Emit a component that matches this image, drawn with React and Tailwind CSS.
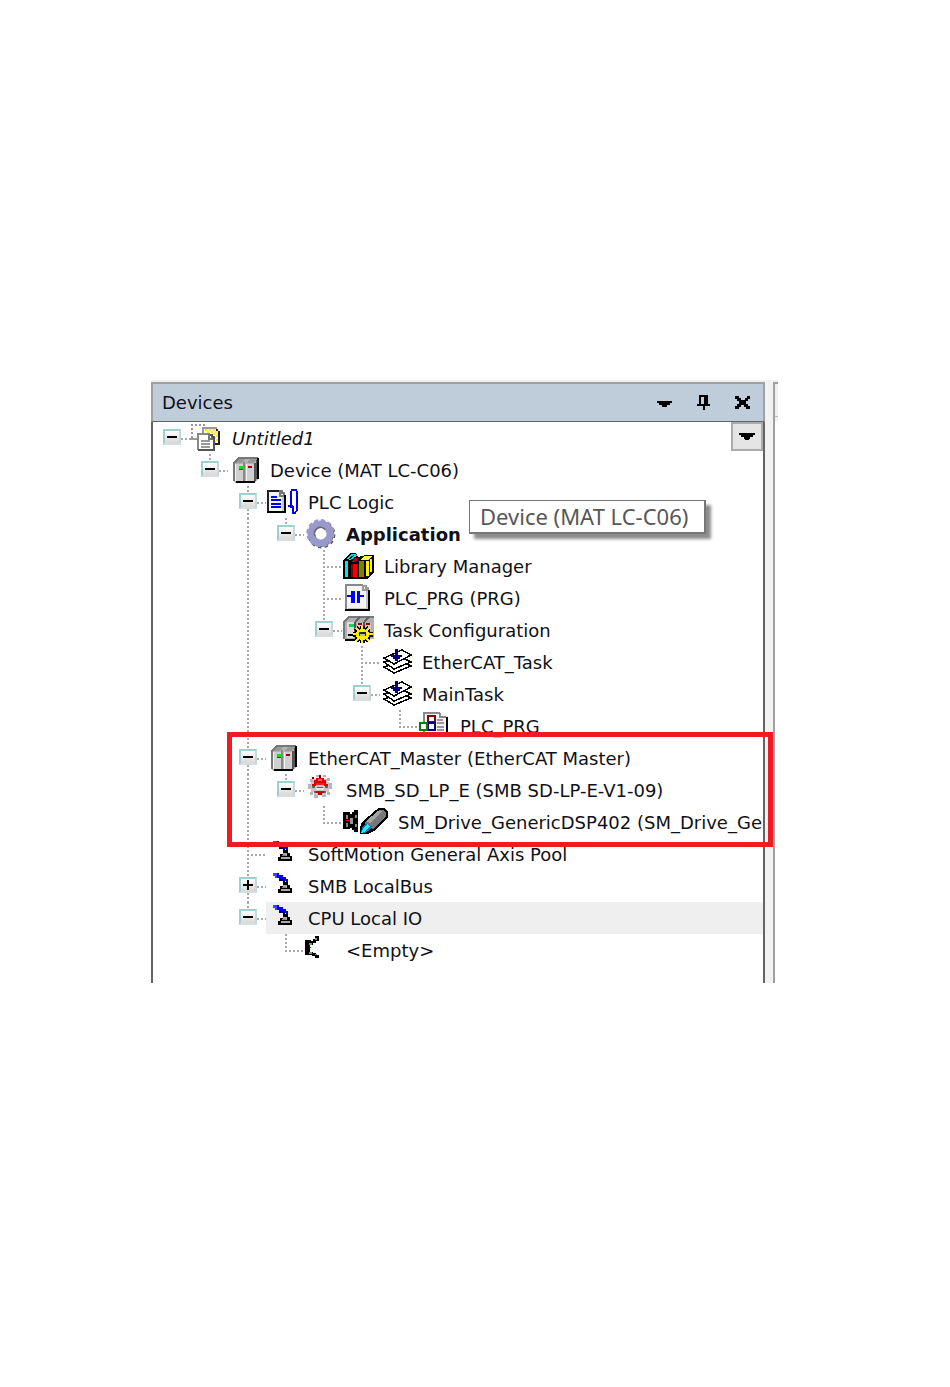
import React from 'react';

const svgProps = {
  viewBox: '0 0 32 32',
  className: 'block h-8 w-8 shrink-0 overflow-visible',
  shapeRendering: 'crispEdges',
  'aria-hidden': true,
};

function ProjectIcon() {
  return (
    <svg {...svgProps}>
      <path d="M1 3H16M2 6V18" stroke="#999" strokeWidth="2" strokeDasharray="2 2" fill="none" />
      <path d="M0 17H7" stroke="#999" strokeWidth="2" />
      <path d="M13 6H28V24H13Z" fill="#fffde0" />
      <path d="M15 8h13M15 12h13M24 16h4M24 20h4" stroke="#ffee00" strokeWidth="2" strokeDasharray="2 2" />
      <path d="M17 10h11M26 14h2M26 18h2M26 22h2" stroke="#ffee00" strokeWidth="2" strokeDasharray="2 2" />
      <path d="M13 11V6H27" stroke="#999" strokeWidth="2" fill="none" />
      <path d="M26 7h2v2h2v14h-6v-2h4V9h-2z" fill="#222" />
      <path d="M7 11H20L25 16V29H7Z" fill="#fff" />
      <path d="M8 28V12H20" stroke="#888" strokeWidth="2" fill="none" />
      <path d="M19 12v5h5" stroke="#777" strokeWidth="1.5" fill="none" />
      <path d="M20 13h2v2h2v13H8" stroke="#555" strokeWidth="2" fill="none" />
      <path d="M11 19H20M11 22H20M11 25H20" stroke="#999" strokeWidth="1.6" />
    </svg>
  );
}

function DeviceIcon() {
  return (
    <svg {...svgProps}>
      <path d="M5 9L10 4H30V25L26 29H7L5 27Z" fill="#b4b4b4" />
      <path d="M6 9L11 4H18L14 9ZM19 9L23 4H30L26 9Z" fill="#999" />
      <path d="M6 27V9L11 4H30" stroke="#777" strokeWidth="2" fill="none" />
      <path d="M8 10H16V27H8ZM19 10H26V27H19Z" fill="#cfcfcf" />
      <path d="M16 8V28" stroke="#888" strokeWidth="2" />
      <path d="M18 10V27M7 10V27" stroke="#f4f4f4" strokeWidth="1" />
      <path d="M26 9h2V6h2v19h-2v2h-2z" fill="#555" />
      <path d="M30 4V25M8 28H27" stroke="#000" strokeWidth="2" />
      <path d="M11 12h4v3h-4z" fill="#00e800" />
      <path d="M11 15h4v1h-4z" fill="#006b00" />
      <path d="M20 12h4v2h-4z" fill="#a00000" />
    </svg>
  );
}

function LogicIcon() {
  return (
    <svg {...svgProps}>
      <path d="M1 4H14L20 10V27H1Z" fill="#f4f4f4" />
      <path d="M2 27V5H14" stroke="#222" strokeWidth="1.6" fill="none" />
      <path d="M14 4v6h6M14 5h2v2h2v2" stroke="#777" strokeWidth="1.6" fill="none" />
      <path d="M17 11V26" stroke="#c8c8c8" strokeWidth="2" />
      <path d="M19 9V26H1" stroke="#000" strokeWidth="2" fill="none" />
      <path d="M5 11H11M5 14H15M5 18H15M5 21H15" stroke="#0000f0" strokeWidth="1.8" />
      <path d="M25 22V6L26 4H30L31 6V24L29 27H27V20M22 20H27" stroke="#0000f0" strokeWidth="1.6" fill="none" />
    </svg>
  );
}

function GearIcon() {
  return (
    <svg {...svgProps} shapeRendering="auto">
      <circle cx="17.5" cy="16.5" r="12.4" fill="none" stroke="#555" strokeWidth="3" strokeDasharray="3.2 3.3" />
      <circle cx="17" cy="16" r="9.4" fill="none" stroke="#666" strokeWidth="7" />
      <circle cx="16.5" cy="15.2" r="12.6" fill="none" stroke="#9999cc" strokeWidth="3" strokeDasharray="3.8 2.8" />
      <circle cx="16.5" cy="15.4" r="9.6" fill="none" stroke="#9999cc" strokeWidth="6.6" />
      <path d="M11 18A6 6 0 0 1 21 11.5" stroke="#666677" strokeWidth="1.5" fill="none" />
    </svg>
  );
}

function LibraryIcon() {
  return (
    <svg {...svgProps}>
      <path d="M1 10L8 3H14L16 7L24 5L26 5H32V22L26 29H1Z" fill="#000" />
      <path d="M3 11h3v16H3z" fill="#00e5e5" />
      <path d="M4 9L9 4H13L15 6L10 10H7Z" fill="#00e5e5" />
      <path d="M6 10L12 5M8 11L14 7" stroke="#000" strokeWidth="1" />
      <path d="M9 14h2v13H9z" fill="#800000" />
      <path d="M11 14h4v13h-4z" fill="#f00000" />
      <path d="M9 12L13 8H16L14 12Z" fill="#c00000" />
      <path d="M17 11h5v16h-5z" fill="#808000" />
      <path d="M18 10L22 6H30L26 10Z" fill="#ffff40" />
      <path d="M24 11h3v15h-3zM28 9h2v13h-2z" fill="#fff000" />
    </svg>
  );
}

function ProgramIcon() {
  return (
    <svg {...svgProps}>
      <path d="M3 2H22L28 8V29H3Z" fill="#f4f4f4" />
      <path d="M4 29V3H21" stroke="#888" strokeWidth="2" fill="none" />
      <path d="M21 3v5h6M22 4h2v2h2v2" stroke="#999" strokeWidth="1.6" fill="none" />
      <path d="M25 9V27H6" stroke="#c4c4c4" strokeWidth="2" fill="none" />
      <path d="M27 8V28H3" stroke="#000" strokeWidth="2" fill="none" />
      <path d="M5 13h4V9h4v12H9v-6H5zM15 9h3v4h4v2h-4v6h-3z" fill="#0000ff" />
    </svg>
  );
}

function TaskConfigIcon() {
  const rays = 'M20 20V12M20 20V29M20 20H11M20 20H31M20 20L14 14M20 20L27 14M20 20L14 27M20 20L27 27';
  return (
    <svg {...svgProps}>
      <path d="M1 8L6 3H32V25H27L3 26L1 24Z" fill="#b0b0b0" />
      <path d="M2 25V8L7 3H32" stroke="#777" strokeWidth="2" fill="none" />
      <path d="M5 8h7v16H5z" fill="#dcdcdc" />
      <path d="M13 8L18 3M22 8L27 3" stroke="#666" strokeWidth="2" />
      <path d="M13 8V22M22 8V14" stroke="#555" strokeWidth="2" />
      <path d="M15 9h6v8h-6zM24 9h5v8h-5z" fill="#ccc" />
      <path d="M7 10h5v3H7z" fill="#00e040" />
      <path d="M16 9h4v2h-4zM24 9h4v2h-4z" fill="#a00000" />
      <path d="M6 20h6v2H6zM3 25h11v2H3z" fill="#000" />
      <path d={rays} stroke="#000" strokeWidth="5" />
      <ellipse cx="20.5" cy="20.5" rx="8.5" ry="7" fill="#000" />
      <path d={rays} stroke="#ffee00" strokeWidth="2" />
      <ellipse cx="20.5" cy="20.5" rx="7" ry="5.5" fill="#ffee00" />
      <path d="M17 18h7v4h-7z" fill="#222" />
      <path d="M18 20h5v2h-5z" fill="#bbb" />
    </svg>
  );
}

function TaskIcon() {
  return (
    <svg {...svgProps}>
      <g fill="#fff" stroke="#000" strokeWidth="1.5">
        <path d="M4 21L21 15L31 20L14 27Z" />
        <path d="M4 16L21 11L31 16L14 23Z" />
        <path d="M4 12L22 4L31 9L14 18Z" />
      </g>
      <path d="M15 3h3v6h4v2h-2v2h-2v2h-3v-2h-2v-2h-2V9h4z" fill="#000080" />
    </svg>
  );
}

function CallIcon() {
  return (
    <svg {...svgProps} viewBox="0 0 32 24" className="block h-6 w-8 shrink-0 self-start">
      <path d="M6 3H23L29 9V24H6Z" fill="#f4f4f4" />
      <path d="M6 24V3H22" stroke="#888" strokeWidth="2.4" fill="none" />
      <path d="M22 3v4h6" stroke="#888" strokeWidth="1.6" fill="none" />
      <path d="M29 7V24" stroke="#000" strokeWidth="2" />
      <path d="M19 10H25M19 13H26M19 17H26M19 20H26" stroke="#999" strokeWidth="1.5" />
      <path d="M10 6H17V12H10Z" fill="#fff" stroke="#800000" strokeWidth="2" />
      <path d="M10 13H17V20H10Z" fill="#fff" stroke="#000090" strokeWidth="2" />
      <path d="M2 13H9V20H2Z" fill="#fff" stroke="#008000" strokeWidth="2" />
    </svg>
  );
}

function SlaveIcon() {
  return (
    <svg {...svgProps}>
      <path d="M12 1h3v2h-3zM19 1h3v2h-3zM6 5h3v3H6zM23 4h3v3h-3zM4 10h3v5H4zM25 9h3v6h-3zM6 18h3v3H6zM23 18h3v3h-3zM10 21h4v3h-4zM18 21h4v2h-4z" fill="#b5b5b5" />
      <path d="M9 5h14v3h2v10h-3v3H10v-3H7V8h2z" fill="#c6c6c6" />
      <path d="M12 4h8v2h2v4h2v2h-4v-2h-8v2H8v-2h2V6h2z" fill="#dd0000" />
      <path d="M12 9h8v2h-8z" fill="#ee2020" />
      <path d="M12 17h8v2h-2v2h-4v-2h-2z" fill="#d00000" />
      <path d="M14 5h4v2h-4z" fill="#ff6060" />
      <path d="M8 12h3v2H8zM21 12h3v2h-3zM13 13h6v1h-6zM10 17h2v2h-2zM20 17h2v2h-2z" fill="#666" />
      <path d="M12 14h8v2h-8z" fill="#e4e4e4" />
      <path d="M15 1h2v3h-2zM8 3h2v2H8z" fill="#800000" />
    </svg>
  );
}

function DriveIcon() {
  return (
    <svg {...svgProps} viewBox="0 0 48 32" className="-mr-[2px] block h-8 w-12 shrink-0">
      <path d="M1 6h7v2h2V6h2V4h4v22h-4v-2h-2v-2H8v1H1z" fill="#000" />
      <path d="M4 9h2v4H4zM4 17h2v4H4zM13 9h2v3h-2zM13 18h2v3h-2z" fill="#888" />
      <path d="M8 12h3v6H8z" fill="#999" />
      <path d="M4 14h4v1H4z" fill="#e00000" />
      <path d="M18 21L20 16L34 4L37 2H42L46 6V12L32 25L26 28H18Z" fill="#000" />
      <path d="M22 17L35 6L38 4H41L44 7V11L31 23Z" fill="#777" />
      <path d="M24 15L36 5H40L28 17Z" fill="#a5a5a5" />
      <path d="M20 22L23 18L30 20L28 24L23 27H19Z" fill="#0070c0" />
      <path d="M21 23L25 18L28 20L22 26L19 27Z" fill="#20e8ff" />
    </svg>
  );
}

function AxisIcon() {
  return (
    <svg {...svgProps}>
      <path d="M7 3h6v2h4v2h3v2h2v7h-2v-5h-3V9h-4V8H9V6H7z" fill="#0000f0" />
      <path d="M7 3h4v5H9V6H7z" fill="#4040ff" />
      <path d="M13 9h4v2h2v2h-2v-2h-4z" fill="#000050" />
      <path d="M17 12h5v3h2v3h2v5H12v-4h2v-3h3z" fill="#000" />
      <path d="M17 15h4v3h-4zM15 19h9v2h-9z" fill="#aaa" />
      <path d="M16 17h4v1h-4z" fill="#989800" />
    </svg>
  );
}

function SlotIcon() {
  return (
    <svg {...svgProps}>
      <path d="M1 6h6v1h2V5h2V2h4v5h-3v2H9v2H6v7h3v1h3v2h3v3h-4v-2H8v-1H1z" fill="#000" />
      <path d="M5 9h3v2H5zM5 18h3v2H5zM11 4h2v2h-2zM11 20h2v1h-2z" fill="#888" />
      <path d="M5 13h2v1H5z" fill="#d00000" />
    </svg>
  );
}

const before = [
  { level: 0, label: 'Untitled1', icon: ProjectIcon, toggle: '-', root: true, style: 'italic' },
  { level: 1, label: 'Device (MAT LC-C06)', icon: DeviceIcon, toggle: '-', last: true },
  { level: 2, label: 'PLC Logic', icon: LogicIcon, toggle: '-' },
  { level: 3, label: 'Application', icon: GearIcon, toggle: '-', last: true, through: [2], style: 'font-bold' },
  { level: 4, label: 'Library Manager', icon: LibraryIcon, through: [2] },
  { level: 4, label: 'PLC_PRG (PRG)', icon: ProgramIcon, through: [2] },
  { level: 4, label: 'Task Configuration', icon: TaskConfigIcon, toggle: '-', last: true, through: [2] },
  { level: 5, label: 'EtherCAT_Task', icon: TaskIcon, through: [2] },
  { level: 5, label: 'MainTask', icon: TaskIcon, toggle: '-', last: true, through: [2] },
  { level: 6, label: 'PLC_PRG', icon: CallIcon, last: true, through: [2] },
];

const marked = [
  { level: 2, label: 'EtherCAT_Master (EtherCAT Master)', icon: DeviceIcon, toggle: '-' },
  { level: 3, label: 'SMB_SD_LP_E (SMB SD-LP-E-V1-09)', icon: SlaveIcon, toggle: '-', last: true, through: [2] },
  { level: 4, label: 'SM_Drive_GenericDSP402 (SM_Drive_Ge', icon: DriveIcon, last: true, through: [2] },
];

const after = [
  { level: 2, label: 'SoftMotion General Axis Pool', icon: AxisIcon },
  { level: 2, label: 'SMB LocalBus', icon: AxisIcon, toggle: '+' },
  { level: 2, label: 'CPU Local IO', icon: AxisIcon, toggle: '-', last: true, selected: true },
  { level: 3, label: '<Empty>', icon: SlotIcon, last: true },
];

const vDots = 'w-[2px] bg-[repeating-linear-gradient(180deg,#a8a8a8_0_2px,transparent_2px_4px)]';
const hDots = 'h-[2px] bg-[repeating-linear-gradient(90deg,#a8a8a8_0_2px,transparent_2px_4px)]';

function Toggle({ sign, label }) {
  return (
    <button
      type="button"
      aria-label={(sign === '-' ? 'Collapse ' : 'Expand ') + label}
      className="flex h-4 w-[18px] items-center justify-center border-2 border-t-[#9fcfd0] border-r-[#c4dada] border-b-[#dcdcdc] border-l-[#9fcfd0] bg-linear-to-b from-white to-[#d8d8d8]"
    >
      <svg viewBox="0 0 10 10" className="h-[10px] w-[10px]" shapeRendering="crispEdges" aria-hidden="true">
        <path d={sign === '-' ? 'M0 4H10V6H0Z' : 'M0 4H4V0H6V4H10V6H6V10H4V6H0Z'} fill="#000" />
      </svg>
    </button>
  );
}

function Branch({ row }) {
  const { toggle, last, root, label } = row;
  return (
    <span className="grid h-8 w-9 shrink-0 grid-cols-[9px_18px_9px]">
      <span className="col-start-2 row-start-1 flex h-8 flex-col items-center">
        <span className={`${root ? 'invisible' : ''} ${toggle ? 'h-[7px]' : 'h-4'} ${vDots}`} />
        {toggle && <Toggle sign={toggle} label={label} />}
        {!last && !root && <span className={`flex-1 ${vDots}`} />}
      </span>
      {toggle ? (
        <span className={`col-start-3 row-start-1 mt-4 ${hDots}`} />
      ) : (
        <span className={`col-span-2 col-start-2 row-start-1 mt-4 ml-2 ${hDots}`} />
      )}
    </span>
  );
}

function TreeRow({ row }) {
  const Icon = row.icon;
  return (
    <li role="treeitem" aria-level={row.level + 1} className="flex h-8 overflow-hidden pl-px">
      {Array.from({ length: row.level }, (_, i) => (
        <span key={i} className="flex w-[38px] shrink-0 pl-[17px]">
          {row.through?.includes(i) && <span className={`h-8 ${vDots}`} />}
        </span>
      ))}
      <Branch row={row} />
      <span className={`flex min-w-0 flex-1 items-center gap-[10px] ${row.selected ? 'bg-[#efefef]' : ''}`}>
        <Icon />
        <span className={`whitespace-nowrap pt-[2px] ${row.style || ''}`}>{row.label}</span>
      </span>
    </li>
  );
}

export default function App() {
  return (
    <main className="min-h-screen bg-white pt-[380px] pr-[172px] pb-[404px] pl-[151px] font-['DejaVu_Sans',sans-serif] text-[18px] leading-6 text-[#101018]">
      <div className="flex border-t-2 border-[#f0f0f0]">
        <section className="relative min-w-0 flex-1" aria-label="Devices">
          <header className="flex h-10 items-center border-2 border-b border-[#a0a0a0] border-b-[#646464] bg-[#bfccda] pr-2 pl-[9px]">
            <h1 className="flex-1">Devices</h1>
            <div className="flex gap-[15px]">
              <button type="button" aria-label="Window menu" className="h-6 w-6">
                <svg viewBox="0 0 24 24" shapeRendering="crispEdges" aria-hidden="true"><path d="M4 10H19V12H17V14H14V16H9V14H6V12H4Z" /></svg>
              </button>
              <button type="button" aria-label="Auto hide" className="h-6 w-6">
                <svg viewBox="0 0 24 24" shapeRendering="crispEdges" aria-hidden="true"><path d="M7 4H16V13H18V15H13V19H11V15H5V13H7ZM9 6V13H12V6Z" fillRule="evenodd" /></svg>
              </button>
              <button type="button" aria-label="Close" className="h-6 w-6">
                <svg viewBox="0 0 24 24" shapeRendering="crispEdges" aria-hidden="true"><path d="M4 5H8V7H10V9H14V7H16V5H19V8H17V10H15V13H17V15H19V18H15V16H13V14H10V16H8V18H4V15H6V13H8V10H6V8H4Z" /></svg>
              </button>
            </div>
          </header>
          <div className="relative border-x-2 border-[#646464] pb-[17px]">
            <ul role="tree">
              {before.map((row) => <TreeRow key={row.level + row.label} row={row} />)}
            </ul>
            <div className="relative">
              <ul role="tree">
                {marked.map((row) => <TreeRow key={row.label} row={row} />)}
              </ul>
              <div className="pointer-events-none absolute -top-[10px] -right-[10px] -bottom-[9px] left-[74px] z-10 border-[5px] border-[#ed1c24]" />
            </div>
            <ul role="tree">
              {after.map((row) => <TreeRow key={row.label} row={row} />)}
            </ul>
            <button type="button" aria-label="Show options" className="absolute top-0 right-0 flex h-[29px] w-8 items-center justify-center border-2 border-[#ababab] bg-[#e5e5e5]">
              <svg viewBox="0 0 16 8" className="h-2 w-4" shapeRendering="crispEdges" aria-hidden="true"><path d="M0 0H16V2H14V4H11V6H10V7H6V6H5V4H2V2H0Z" /></svg>
            </button>
            <div role="tooltip" className="absolute top-[78px] left-[316px] flex h-[34px] items-center border-2 border-t border-l border-[#767676] bg-white pr-4 pb-[2px] pl-[10px] font-['Noto_Sans',sans-serif] text-[22px] whitespace-nowrap text-[#575757] shadow-[5px_5px_3px_#8c8c8c]">
              Device (MAT LC-C06)
            </div>
          </div>
        </section>
        <div className="w-2 bg-[#f2f2f2]" />
        <div className="w-[5px] border-t-2 border-l-2 border-[#a0a0a0]">
          <div className="h-[33px] border-b border-[#b8b8b8] bg-[#f0f0f0]" />
          <div className="h-1 bg-[#f0f0f0]" />
        </div>
      </div>
    </main>
  );
}
